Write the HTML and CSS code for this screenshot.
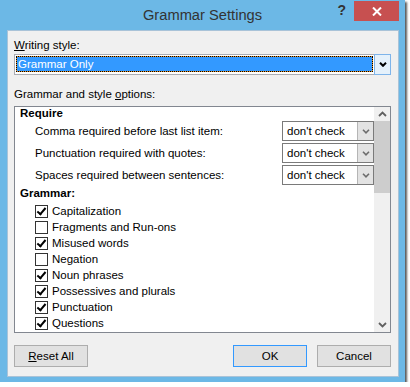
FILE: index.html
```html
<!DOCTYPE html>
<html lang="en">
<head>
    <meta charset="UTF-8">
    <title>Grammar Settings</title>
    <link rel="stylesheet" href="styles.css">
</head>
<body>
    <div class="window">
        <div class="titlebar">
            <div></div>
            <div class="title">Grammar Settings</div>
            <div class="controls">
                <span class="help">?</span>
                <span class="close">
                    <svg width="10" height="9" viewBox="0 0 10 9"><path d="M1 0.5 L9 8.5 M9 0.5 L1 8.5" stroke="#fff" stroke-width="2"/></svg>
                </span>
            </div>
        </div>

        <div class="panel">
            <div class="label"><u>W</u>riting style:</div>
            <div class="combo">
                <div class="combo-field"><span class="selected">Grammar Only</span></div>
                <div class="combo-btn">
                    <svg width="8" height="5" viewBox="0 0 8 5"><polyline points="1,0.8 4,3.8 7,0.8" fill="none" stroke="#000" stroke-width="2"/></svg>
                </div>
            </div>

            <div class="label options-label">Grammar and style <u>o</u>ptions:</div>
            <div class="listbox">
                <div class="list">
                    <div class="head">Require</div>
                    <div class="opt-row">
                        <span>Comma required before last list item:</span>
                        <div class="select"><span>don't check</span><i><svg width="8" height="5" viewBox="0 0 8 5"><polyline points="1,0.8 4,3.8 7,0.8" fill="none" stroke="#6d6d6d" stroke-width="1.6"/></svg></i></div>
                    </div>
                    <div class="opt-row">
                        <span>Punctuation required with quotes:</span>
                        <div class="select"><span>don't check</span><i><svg width="8" height="5" viewBox="0 0 8 5"><polyline points="1,0.8 4,3.8 7,0.8" fill="none" stroke="#6d6d6d" stroke-width="1.6"/></svg></i></div>
                    </div>
                    <div class="opt-row">
                        <span>Spaces required between sentences:</span>
                        <div class="select"><span>don't check</span><i><svg width="8" height="5" viewBox="0 0 8 5"><polyline points="1,0.8 4,3.8 7,0.8" fill="none" stroke="#6d6d6d" stroke-width="1.6"/></svg></i></div>
                    </div>
                    <div class="head grammar">Grammar:</div>
                    <div class="check-row"><span class="box on"></span>Capitalization</div>
                    <div class="check-row"><span class="box"></span>Fragments and Run-ons</div>
                    <div class="check-row"><span class="box on"></span>Misused words</div>
                    <div class="check-row"><span class="box"></span>Negation</div>
                    <div class="check-row"><span class="box on"></span>Noun phrases</div>
                    <div class="check-row"><span class="box on"></span>Possessives and plurals</div>
                    <div class="check-row"><span class="box on"></span>Punctuation</div>
                    <div class="check-row"><span class="box on"></span>Questions</div>
                    <div class="check-row"><span class="box on"></span>Relative clauses</div>
                </div>
                <div class="scrollbar">
                    <div class="sb-arrow">
                        <svg width="9" height="6" viewBox="0 0 9 6"><polyline points="1,5 4.5,1.5 8,5" fill="none" stroke="#606060" stroke-width="1.8"/></svg>
                    </div>
                    <div class="thumb"></div>
                    <div class="track"></div>
                    <div class="sb-arrow">
                        <svg width="9" height="6" viewBox="0 0 9 6"><polyline points="1,1 4.5,4.5 8,1" fill="none" stroke="#606060" stroke-width="1.8"/></svg>
                    </div>
                </div>
            </div>

            <div class="buttons">
                <button type="button" class="btn"><u>R</u>eset All</button>
                <button type="button" class="btn default">OK</button>
                <button type="button" class="btn">Cancel</button>
            </div>
        </div>
    </div>
</body>
</html>
```

FILE: styles.css
```css
* {
    margin: 0;
    padding: 0;
    box-sizing: border-box;
}
body {
    background-color: #fff;
    font-family: "Liberation Sans", Arial, sans-serif;
    font-size: 11.5px;
    color: #000;
}
.window {
    width: 405px;
    height: 382px;
    background-color: #6cb8e6;
    box-shadow: 2px 2px 2px rgba(0,0,0,0.65);
    display: flex;
    flex-direction: column;
}
.titlebar {
    height: 30px;
    display: grid;
    grid-template-columns: 1fr auto 1fr;
}
.title {
    font-size: 14.7px;
    line-height: 30px;
    color: #333;
}
.controls {
    justify-self: end;
    display: flex;
    align-items: flex-start;
}
.help {
    font-size: 14px;
    font-weight: bold;
    line-height: 20px;
    color: #333;
    margin-right: 8px;
}
.close {
    width: 45px;
    height: 20px;
    margin: 1px 6px 0 0;
    background-color: #c75050;
    display: flex;
    align-items: center;
    justify-content: center;
}
.panel {
    flex: 1;
    margin: 0 6px 5px 7px;
    padding: 0 7px 0 6px;
    border: 1px solid #a9c3d8;
    background-color: #f0f0f0;
}
.label {
    margin-top: 7px;
    line-height: 15px;
}
.options-label {
    margin-top: 12px;
}
.combo {
    display: flex;
    height: 21px;
    margin-top: 1px;
}
.combo-field {
    flex: 1;
    background-color: #fff;
    border: 1px solid #abadb3;
    border-right: none;
}
.selected {
    display: block;
    height: 16px;
    margin: 1px 1px 0 1px;
    padding-left: 1px;
    line-height: 14px;
    color: #fff;
    border: 1px dotted #000;
    background: linear-gradient(#3399ff, #3399ff) padding-box, linear-gradient(#e8952a, #e8952a) border-box;
}
.combo-btn {
    width: 17px;
    border: 1px solid #7eb4ea;
    background-color: #e5f1fb;
    display: flex;
    align-items: center;
    justify-content: center;
}
.listbox {
    display: flex;
    height: 227px;
    margin-top: 4px;
    border: 1px solid #828790;
    background-color: #fff;
    overflow: hidden;
}
.list {
    flex: 1;
    overflow: hidden;
}
.head {
    height: 14px;
    line-height: 12px;
    padding-left: 5px;
    font-weight: bold;
}
.head.grammar {
    height: 16px;
}
.opt-row {
    height: 22px;
    display: flex;
    align-items: flex-start;
    padding-left: 20px;
    line-height: 20px;
}
.select {
    margin-left: auto;
    width: 92px;
    height: 20px;
    display: flex;
    border: 1px solid #7a7a7a;
    background-color: #fff;
}
.select span {
    flex: 1;
    padding-left: 4px;
    line-height: 18px;
}
.select i {
    width: 16px;
    border-left: 1px solid #b5b5b5;
    background-color: #e3e3e3;
    display: flex;
    align-items: center;
    justify-content: center;
}
.check-row {
    height: 16px;
    line-height: 16px;
    display: flex;
    align-items: center;
    padding-left: 20px;
}
.box {
    width: 13px;
    height: 13px;
    margin-right: 4px;
    border: 1px solid #333;
    background-color: #fff;
    position: relative;
}
.box.on::after {
    content: "";
    position: absolute;
    left: 3px;
    top: 0px;
    width: 3px;
    height: 7px;
    border: solid #000;
    border-width: 0 2px 2px 0;
    transform: rotate(40deg);
}
.scrollbar {
    width: 16px;
    display: flex;
    flex-direction: column;
    background-color: #f0f0f0;
}
.sb-arrow {
    height: 14px;
    display: flex;
    align-items: center;
    justify-content: center;
}
.thumb {
    height: 72px;
    background-color: #cdcdcd;
}
.track {
    flex: 1;
}
.buttons {
    display: flex;
    gap: 10px;
    margin-top: 12px;
}
.btn {
    width: 74px;
    height: 22px;
    border: 1px solid #adadad;
    background-color: #e1e1e1;
    font-family: inherit;
    font-size: 11.5px;
    color: #000;
}
.btn.default {
    margin-left: auto;
    border-color: #3399ff;
}
```
